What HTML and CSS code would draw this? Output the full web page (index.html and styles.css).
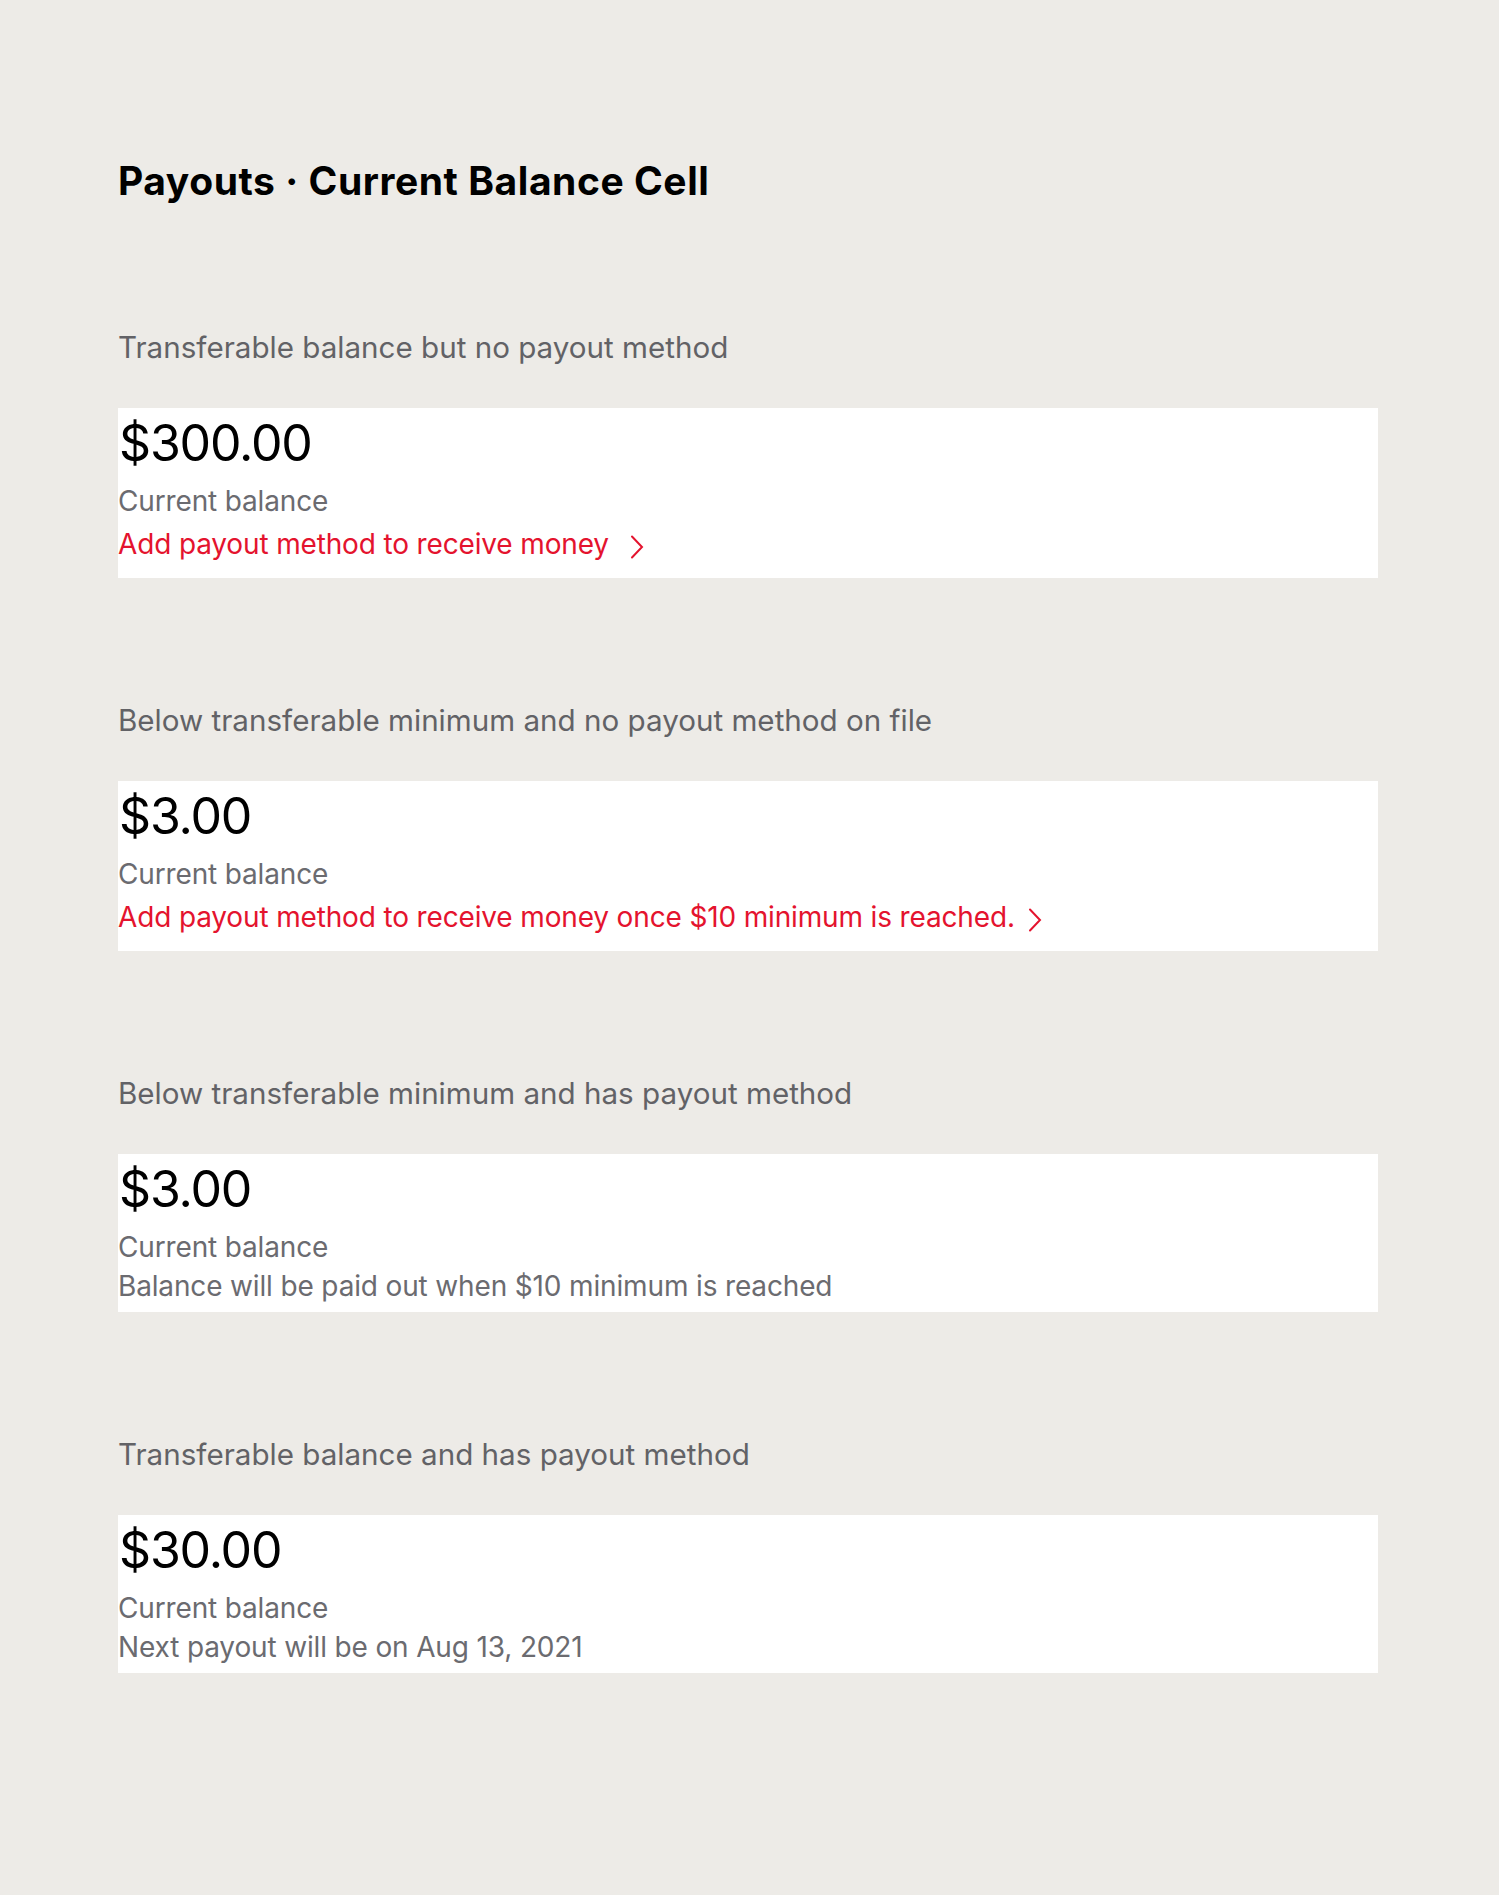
FILE: index.html
```html
<!DOCTYPE html>
<html lang="en">
<head>
<meta charset="utf-8">
<title>Payouts · Current Balance Cell</title>
<link rel="stylesheet" href="styles.css">
</head>
<body>
<main class="page">
  <h1 class="title">Payouts · Current Balance Cell</h1>

  <section class="state">
    <p class="state-label">Transferable balance but no payout method</p>
    <div class="cell">
      <div class="amount">$300.00</div>
      <div class="caption">Current balance</div>
      <a class="link-row" href="#">
        <span class="link-text">Add payout method to receive money&nbsp;</span>
        <svg class="chevron" width="14" height="24" viewBox="0 0 14 24" aria-hidden="true"><path d="M2 1.5 L12 12 L2 22.5" fill="none" stroke="currentColor" stroke-width="2" stroke-linecap="round" stroke-linejoin="miter"/></svg>
      </a>
    </div>
  </section>

  <section class="state">
    <p class="state-label">Below transferable minimum and no payout method on file</p>
    <div class="cell">
      <div class="amount">$3.00</div>
      <div class="caption">Current balance</div>
      <a class="link-row" href="#">
        <span class="link-text">Add payout method to receive money once $10 minimum is reached.</span>
        <svg class="chevron" width="14" height="24" viewBox="0 0 14 24" aria-hidden="true"><path d="M2 1.5 L12 12 L2 22.5" fill="none" stroke="currentColor" stroke-width="2" stroke-linecap="round" stroke-linejoin="miter"/></svg>
      </a>
    </div>
  </section>

  <section class="state">
    <p class="state-label">Below transferable minimum and has payout method</p>
    <div class="cell">
      <div class="amount">$3.00</div>
      <div class="caption">Current balance</div>
      <div class="note">Balance will be paid out when $10 minimum is reached</div>
    </div>
  </section>

  <section class="state">
    <p class="state-label">Transferable balance and has payout method</p>
    <div class="cell">
      <div class="amount">$30.00</div>
      <div class="caption">Current balance</div>
      <div class="note">Next payout will be on Aug 13, 2021</div>
    </div>
  </section>
</main>
</body>
</html>
```

FILE: styles.css
```css
html, body {
  margin: 0;
  padding: 0;
}

body {
  background: #edebe7;
  font-family: Inter, "Noto Sans", "Liberation Sans", sans-serif;
  color: #000;
  min-height: 1895px;
}

.page {
  width: 1260px;
  margin-left: 118px;
  padding-top: 157px;
  padding-bottom: 200px;
  display: flex;
  flex-direction: column;
  gap: 125px;
}

.title {
  margin: 0;
  font-size: 39px;
  line-height: 48px;
  font-weight: 700;
  letter-spacing: 0.55px;
  color: #000;
}

.state {
  display: flex;
  flex-direction: column;
  gap: 44px;
}

.state-label {
  margin: 0;
  font-size: 29.6px;
  line-height: 34px;
  color: #626266;
}

.cell {
  background: #fff;
  display: flex;
  flex-direction: column;
  padding-bottom: 9px;
}

.amount {
  font-size: 50px;
  line-height: 66px;
  font-weight: 400;
  letter-spacing: -1.2px;
  color: #000;
  margin-left: 1px;
  padding-top: 2px;
  margin-bottom: -2px;
}

.caption {
  margin-top: 10px;
  margin-bottom: -2px;
  font-size: 28px;
  line-height: 34px;
  letter-spacing: -0.15px;
  color: #6b6b70;
}

.note {
  margin-top: 7px;
  font-size: 28px;
  line-height: 34px;
  letter-spacing: -0.15px;
  color: #6b6b70;
}

.link-row {
  margin-top: 7px;
  height: 46px;
  padding-top: 4px;
  box-sizing: border-box;
  display: flex;
  align-items: flex-start;
  gap: 13px;
  color: #e4132e;
  text-decoration: none;
  align-self: flex-start;
}

.link-text {
  font-size: 28px;
  line-height: 34px;
  letter-spacing: -0.15px;
}

.chevron {
  display: block;
  flex: none;
  margin-top: 8px;
}
```
